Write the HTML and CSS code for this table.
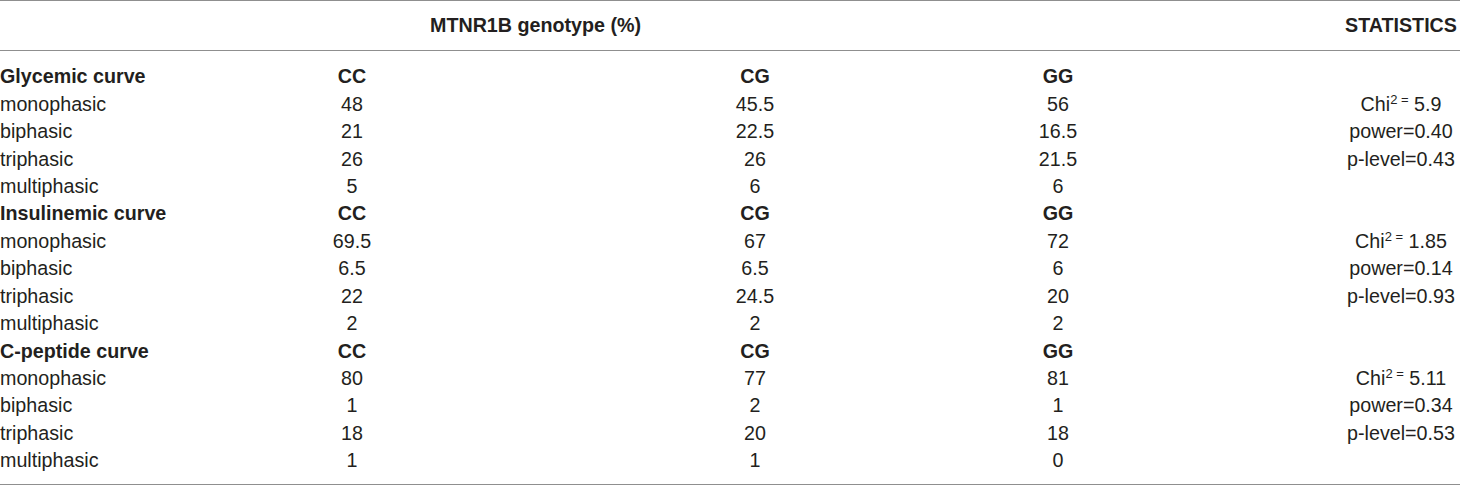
FILE: index.html
```html
<!DOCTYPE html>
<html>
<head>
<meta charset="utf-8">
<link rel="stylesheet" href="styles.css">
</head>
<body>
<div class="table">
  <div class="head">
    <div class="head-title">MTNR1B genotype (%)</div>
    <div class="head-stats">STATISTICS</div>
  </div>
  <div class="tbody">
    <div class="row group"><div class="lab">Glycemic curve</div><div class="cc">CC</div><div class="cg">CG</div><div class="gg">GG</div></div>
    <div class="row"><div class="lab">monophasic</div><div class="cc">48</div><div class="cg">45.5</div><div class="gg">56</div><div class="st">Chi<sup>2 =</sup> 5.9</div></div>
    <div class="row"><div class="lab">biphasic</div><div class="cc">21</div><div class="cg">22.5</div><div class="gg">16.5</div><div class="st">power=0.40</div></div>
    <div class="row"><div class="lab">triphasic</div><div class="cc">26</div><div class="cg">26</div><div class="gg">21.5</div><div class="st">p-level=0.43</div></div>
    <div class="row"><div class="lab">multiphasic</div><div class="cc">5</div><div class="cg">6</div><div class="gg">6</div></div>
    <div class="row group"><div class="lab">Insulinemic curve</div><div class="cc">CC</div><div class="cg">CG</div><div class="gg">GG</div></div>
    <div class="row"><div class="lab">monophasic</div><div class="cc">69.5</div><div class="cg">67</div><div class="gg">72</div><div class="st">Chi<sup>2 =</sup> 1.85</div></div>
    <div class="row"><div class="lab">biphasic</div><div class="cc">6.5</div><div class="cg">6.5</div><div class="gg">6</div><div class="st">power=0.14</div></div>
    <div class="row"><div class="lab">triphasic</div><div class="cc">22</div><div class="cg">24.5</div><div class="gg">20</div><div class="st">p-level=0.93</div></div>
    <div class="row"><div class="lab">multiphasic</div><div class="cc">2</div><div class="cg">2</div><div class="gg">2</div></div>
    <div class="row group"><div class="lab">C-peptide curve</div><div class="cc">CC</div><div class="cg">CG</div><div class="gg">GG</div></div>
    <div class="row"><div class="lab">monophasic</div><div class="cc">80</div><div class="cg">77</div><div class="gg">81</div><div class="st">Chi<sup>2 =</sup> 5.11</div></div>
    <div class="row"><div class="lab">biphasic</div><div class="cc">1</div><div class="cg">2</div><div class="gg">1</div><div class="st">power=0.34</div></div>
    <div class="row"><div class="lab">triphasic</div><div class="cc">18</div><div class="cg">20</div><div class="gg">18</div><div class="st">p-level=0.53</div></div>
    <div class="row"><div class="lab">multiphasic</div><div class="cc">1</div><div class="cg">1</div><div class="gg">0</div></div>
  </div>
</div>
</body>
</html>
```
FILE: styles.css
```css
html, body {
  margin: 0;
  padding: 0;
  background: #ffffff;
}
body {
  font-family: "Liberation Sans", Arial, sans-serif;
  font-size: 19.7px;
  color: #231f20;
  width: 1460px;
}
.table {
  width: 1460px;
  border-top: 1px solid #8f8f8f;
  border-bottom: 1px solid #8f8f8f;
}
.head {
  display: grid;
  grid-template-columns: 430px 1fr 118px;
  height: 49px;
  align-items: center;
  border-bottom: 1px solid #8f8f8f;
  font-weight: bold;
}
.head-title {
  grid-column: 2;
}
.head-stats {
  grid-column: 3;
  text-align: center;
}
.tbody {
  padding: 12.3px 0 9px 0;
}
.row {
  display: grid;
  grid-template-columns: 252px 200px 203px 200px 103px 200px 184px 118px;
  height: 27.43px;
  line-height: 27.43px;
  align-items: center;
}
.row > div {
  grid-row: 1;
  white-space: nowrap;
}
.lab { grid-column: 1; }
.cc { grid-column: 2; text-align: center; }
.cg { grid-column: 4; text-align: center; }
.gg { grid-column: 6; text-align: center; }
.st { grid-column: 8; text-align: center; }
.group {
  font-weight: bold;
}
sup {
  font-size: 13px;
  line-height: 0;
  vertical-align: 7px;
}
```
